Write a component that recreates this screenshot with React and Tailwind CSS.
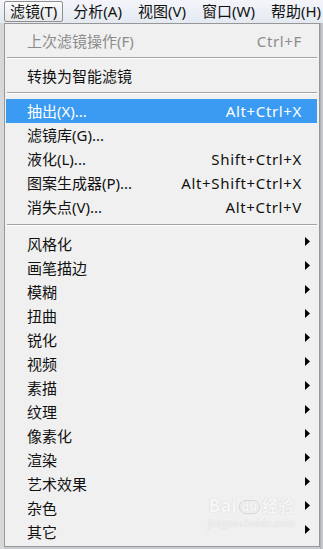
import React from "react";

const font = "font-['Noto_Sans','Noto_Sans_CJK_SC',sans-serif]";

const menus = ["滤镜(T)", "分析(A)", "视图(V)", "窗口(W)", "帮助(H)"];

const groupA = [
  { label: "抽出(X)...", key: "Alt+Ctrl+X", active: true },
  { label: "滤镜库(G)..." },
  { label: "液化(L)...", key: "Shift+Ctrl+X" },
  { label: "图案生成器(P)...", key: "Alt+Shift+Ctrl+X" },
  { label: "消失点(V)...", key: "Alt+Ctrl+V" },
];

const groupB = [
  "风格化",
  "画笔描边",
  "模糊",
  "扭曲",
  "锐化",
  "视频",
  "素描",
  "纹理",
  "像素化",
  "渲染",
  "艺术效果",
  "杂色",
  "其它",
];

function Arrow() {
  return (
    <svg width="5" height="9" viewBox="0 0 5 9" className="ml-auto -mt-[6px]">
      <path d="M0 0 L5 4.5 L0 9 Z" fill="#000" />
    </svg>
  );
}

function Row({ label, shortcut, active, disabled, sub }) {
  return (
    <div
      className={`ml-[1px] mr-[2px] h-[24px] flex items-center pl-[21px] pr-[7px] text-[15px] leading-none ${
        active ? "bg-[#3b9bf2] text-white" : disabled ? "text-[#8c8c8c]" : "text-[#111]"
      }`}
    >
      <span>{label}</span>
      {shortcut && (
        <span className="ml-auto pr-[8px] tracking-[0.65px]">{shortcut}</span>
      )}
      {sub && <Arrow />}
    </div>
  );
}

function Separator({ h = "h-[11px]", top = "pt-[4px]" }) {
  return (
    <div className={`${h} ${top} mx-[2px]`}>
      <div className="h-px bg-[#a4a4a4]" />
      <div className="h-px bg-white" />
    </div>
  );
}

export default function App() {
  return (
    <div
      className={`w-[323px] h-[549px] overflow-hidden bg-[#c9ccd0] flex flex-col ${font}`}
    >
      {/* Menu bar */}
      <div className="h-[23px] shrink-0 flex items-start pt-[1px] pl-[4px] gap-[4px] bg-gradient-to-b from-[#f3f5fa] to-[#e4e9f1]">
        {menus.map((m, i) => (
          <div
            key={m}
            className={`h-[21px] px-[5px] flex items-center text-[15px] leading-none text-[#111] whitespace-nowrap border rounded-[2px] ${
              i === 0
                ? "border-[#8e8f91] bg-gradient-to-b from-[#fbfbfb] to-[#e6e8eb]"
                : "border-transparent"
            }`}
          >
            {m}
          </div>
        ))}
      </div>

      <div className="flex flex-1">
        <div className="w-[4px] bg-[#d7d8da]" />

        {/* Dropdown panel */}
        <div className="relative w-[316px] h-[524px] shrink-0 border border-[#979797] bg-[#f0f0f0] pt-[5px]">
          <Row label="上次滤镜操作(F)" shortcut="Ctrl+F" disabled />
          <Separator />
          <Row label="转换为智能滤镜" />
          <Separator />
          {groupA.map((r) => (
            <Row key={r.label} label={r.label} shortcut={r.key} active={r.active} />
          ))}
          <Separator h="h-[13px]" top="pt-[5px]" />
          {groupB.map((l) => (
            <Row key={l} label={l} sub />
          ))}

          {/* watermark */}
          <div className="absolute left-[203px] top-[472px] flex flex-col items-center text-[#f7f7f7] [text-shadow:0_0_1px_#c4c4c4] pointer-events-none">
            <div className="flex items-end gap-[2px] text-[18px] font-bold leading-none">
              <span>Bai</span>
              <span className="text-[12px] px-[2px] rounded-full border border-[#d6d6d6]">du</span>
              <span className="text-[16px]">经验</span>
            </div>
            <div className="text-[10px] leading-none mt-[4px] text-[#f4f4f4]">
              jingyan.baidu.com
            </div>
          </div>
        </div>

        <div className="flex-1 bg-[#c4c6c9] border-l border-[#b0b2b5]" />
      </div>
    </div>
  );
}
